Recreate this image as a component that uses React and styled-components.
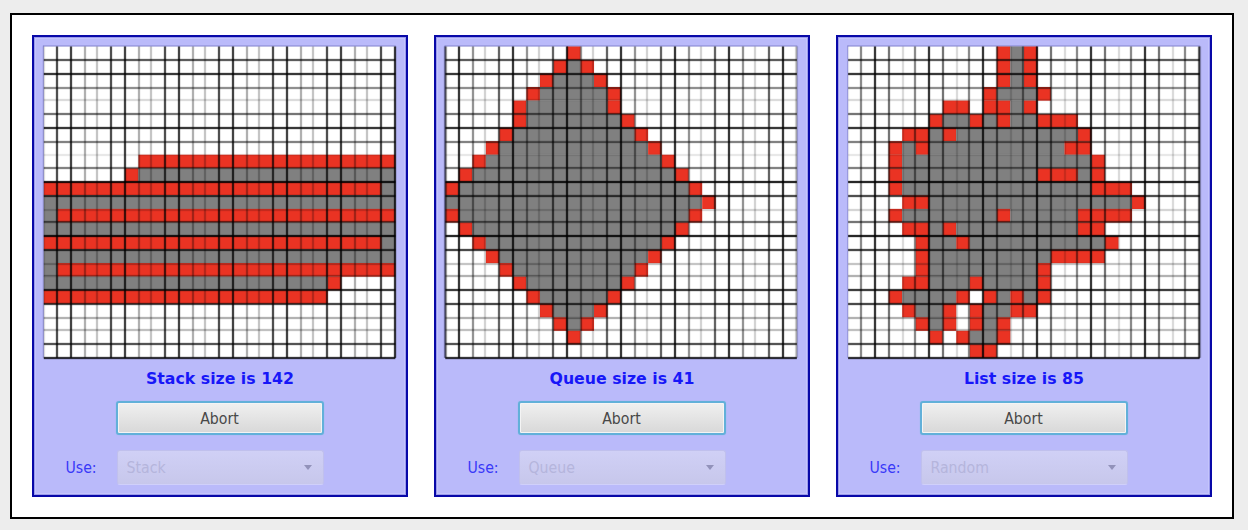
import React from 'react';
import styled, { createGlobalStyle } from 'styled-components';

const GlobalStyle = createGlobalStyle`
  * { box-sizing: border-box; }
  body { margin: 0; background: #ededed; overflow: hidden; }
`;

const Page = styled.main`
  height: 530px;
  padding: 13px 14px 11px 10px;
  font-family: 'DejaVu Sans', sans-serif;
`;

const Frame = styled.section`
  height: 506px;
  display: flex;
  gap: 26px;
  padding: 20px;
  background: #fff;
  border: 2px solid #000;
`;

const Panel = styled.article`
  flex: 0 0 376px;
  height: 462px;
  display: flex;
  flex-direction: column;
  align-items: center;
  background: #babafa;
  border: 2px solid #0808a8;
  box-shadow: inset 0 0 0 1px #9b9beb, inset 0 0 0 2px #c4c4fc;
`;

const Board = styled.svg`
  display: block;
  flex: none;
  width: 372px;
  height: 328px;
`;

const Status = styled.h2`
  margin: 2px 0 0;
  height: 24px;
  font-size: 15.75px;
  line-height: 24px;
  font-weight: 700;
  color: #1717f8;
  white-space: nowrap;
`;

const AbortButton = styled.button`
  width: 208px;
  height: 34px;
  margin: 10px 0 0;
  padding: 0 1px 0 0;
  border: 2px solid #62b0d9;
  border-radius: 3px;
  background: linear-gradient(#f0f0f0, #d8d8d8);
  box-shadow: inset 0 0 0 1px #f4f4f4, 0 0 1px #76bce0;
  font: 15.7px 'DejaVu Sans Condensed', 'DejaVu Sans', sans-serif;
  font-stretch: condensed;
  color: #484848;
`;

const Field = styled.div`
  align-self: stretch;
  display: grid;
  grid-template-columns: 51px 207px;
  align-items: center;
  margin-top: 15px;
  padding-left: 31.5px;
  font: 15.7px/20px 'DejaVu Sans Condensed', 'DejaVu Sans', sans-serif;
  font-stretch: condensed;
`;

const FieldLabel = styled.span`
  color: #3838f8;
`;

const Combo = styled.div`
  height: 35px;
  display: flex;
  align-items: center;
  justify-content: space-between;
  padding: 0 11px 0 9px;
  color: #b5b5dc;
  border: 1px solid #c0c0ed;
  border-bottom-color: #d0d0fa;
  border-radius: 3px;
  background: linear-gradient(#d0d0f6, #c7c7eb);
`;

const Arrow = styled.span`
  border: 4.5px solid transparent;
  border-top: 5px solid #9292ba;
  border-bottom: 0;
`;

// Line centres in board units, with the darkness of each rule.
const ROW_LINES = [
  [23, 0.6], [37, 0.75], [51, 0.4], [63, 0.12], [77, 0.5], [91, 0.75],
  [105, 0.45], [118, 0.08], [131, 0.45], [145, 0.82], [159, 0.65], [173, 0.14],
  [185, 0.5], [199, 0.82], [213, 0.68], [227, 0.2], [239, 0.27], [253, 0.72],
  [267, 0.68], [281, 0.27], [293, 0.22], [307, 0.63], [321, 0.75],
];

const TOP = 9.4;
const ROW = 13.54;
const COL = 13.52;
const rep = (c, n) => c.repeat(n);

const SEARCHES = [
  {
    title: 'Stack size is 142',
    option: 'Stack',
    left: 9.8,
    first: 23,
    steps: [14, 14, 12, 14],
    shades: [0.65, 0.7, 0.28, 0.2],
    edges: [0.12, 0.75],
    rows: [
      '', '', '', '', '', '', '', '',
      rep('.', 7) + rep('R', 19),
      rep('.', 6) + 'R' + rep('g', 19),
      rep('R', 25) + 'g',
      rep('g', 26),
      'g' + rep('R', 25),
      rep('g', 26),
      rep('R', 25) + 'g',
      rep('g', 26),
      'g' + rep('R', 25),
      rep('g', 21) + 'R',
      rep('R', 21),
    ],
  },
  {
    title: 'Queue size is 41',
    option: 'Queue',
    left: 9.3,
    first: 23,
    steps: [14, 12, 14, 14],
    shades: [0.75, 0.38, 0.15, 0.57],
    edges: [0.65, 0.3],
    rows: [
      '.........R',
      '........RgR',
      '.......RgggR',
      '......RgggggR',
      '.....RggggggR',
      '.....RgggggggR',
      '....RgggggggggR',
      '...RgggggggggggR',
      '..RgggggggggggggR',
      '.RgggggggggggggggR',
      'RgggggggggggggggggR',
      'gggggggggggggggggggR',
      'RgggggggggggggggggR',
      '.RgggggggggggggggR',
      '..RgggggggggggggR',
      '...RgggggggggggR',
      '....RgggggggggR',
      '.....RgggggggR',
      '......RgggggR',
      '.......RgggR',
      '........RgR',
      '.........R',
    ],
  },
  {
    title: 'List size is 85',
    option: 'Random',
    left: 10.1,
    first: 23,
    steps: [14, 14, 14, 12],
    // The sequence starts on the second column rule of the four-rule cycle.
    shades: [0.42, 0.75, 0.5, 0.12],
    edges: [0.04, 0.75],
    rows: [
      '...........RgR',
      '...........RgR',
      '...........RgR',
      '..........RgggR',
      '.......RR.RRgR',
      '......RggRgRggRRR',
      '....RRgRgggggggggR',
      '...RgRggggggggggRR',
      '...RggggggggggggggR',
      '...RggggggggggRRRgR',
      '...RggggggggggggggRRR',
      '....RRgggggggggggggggR',
      '...RgggggggRgggggRRRR',
      '....RRgRgggggggggRR',
      '.....RggRggggggggggR',
      '.....RgggggggggRRRR',
      '.....RggggggggR',
      '....RRgggRggggR',
      '...RggggRwRgRgR',
      '....RggRwRggRR',
      '.....RgRwRgR',
      '......RwRggR',
      '.........RR',
    ],
  },
];

const FILL = { R: '#ea3323', g: '#808080' };

function columnLines({ first, steps, shades }) {
  const lines = [];
  let x = first;
  for (let i = 0; i < 25; i += 1) {
    lines.push([x, shades[i % 4]]);
    x += steps[i % 4];
  }
  return lines;
}

function Grid({ search }) {
  const { left, rows, edges } = search;
  const width = 26 * COL;
  const height = 23 * ROW;
  const right = left + width;
  const cols = [[left + 0.2, edges[0]], ...columnLines(search), [right - 0.3, edges[1]]];
  return (
    <Board viewBox="0 0 372 328" aria-label="Maze">
      <rect x={left} y={TOP} width={width} height={height} fill="#fff" />
      {rows.flatMap((row, r) =>
        (row.match(/(.)\1*/g) || []).reduce(
          (acc, run) => {
            if (FILL[run[0]]) {
              acc.cells.push(
                <rect
                  key={`${r}-${acc.at}`}
                  x={left + acc.at * COL}
                  y={TOP + r * ROW}
                  width={run.length * COL}
                  height={ROW + 0.1}
                  fill={FILL[run[0]]}
                />
              );
            }
            acc.at += run.length;
            return acc;
          },
          { at: 0, cells: [] }
        ).cells
      )}
      {cols.map(([x, a]) => (
        <g key={`c${x}`}>
          <rect x={x - 1} y={TOP} width="2" height={height} fillOpacity={a} />
          <rect x={x - 2} y={TOP} width="4" height={height} fillOpacity={a * 0.16} />
        </g>
      ))}
      {ROW_LINES.map(([y, a]) => (
        <g key={`r${y}`}>
          <rect x={left} y={y - 1} width={width} height="2" fillOpacity={a} />
          <rect x={left} y={y - 2} width={width} height="4" fillOpacity={a * 0.16} />
        </g>
      ))}
      <rect x={left - 0.5} y={TOP - 1} width={width + 1} height="1.2" fill="#4848a0" fillOpacity="0.4" />
      <rect x={left - 1} y={TOP - 1} width="1.2" height={height + 1} fill="#4848a0" fillOpacity="0.25" />
    </Board>
  );
}

export default function App() {
  return (
    <Page>
      <GlobalStyle />
      <Frame>
        {SEARCHES.map((search) => (
          <Panel key={search.option}>
            <Grid search={search} />
            <Status>{search.title}</Status>
            <AbortButton type="button">Abort</AbortButton>
            <Field>
              <FieldLabel>Use:</FieldLabel>
              <Combo>
                {search.option}
                <Arrow />
              </Combo>
            </Field>
          </Panel>
        ))}
      </Frame>
    </Page>
  );
}
